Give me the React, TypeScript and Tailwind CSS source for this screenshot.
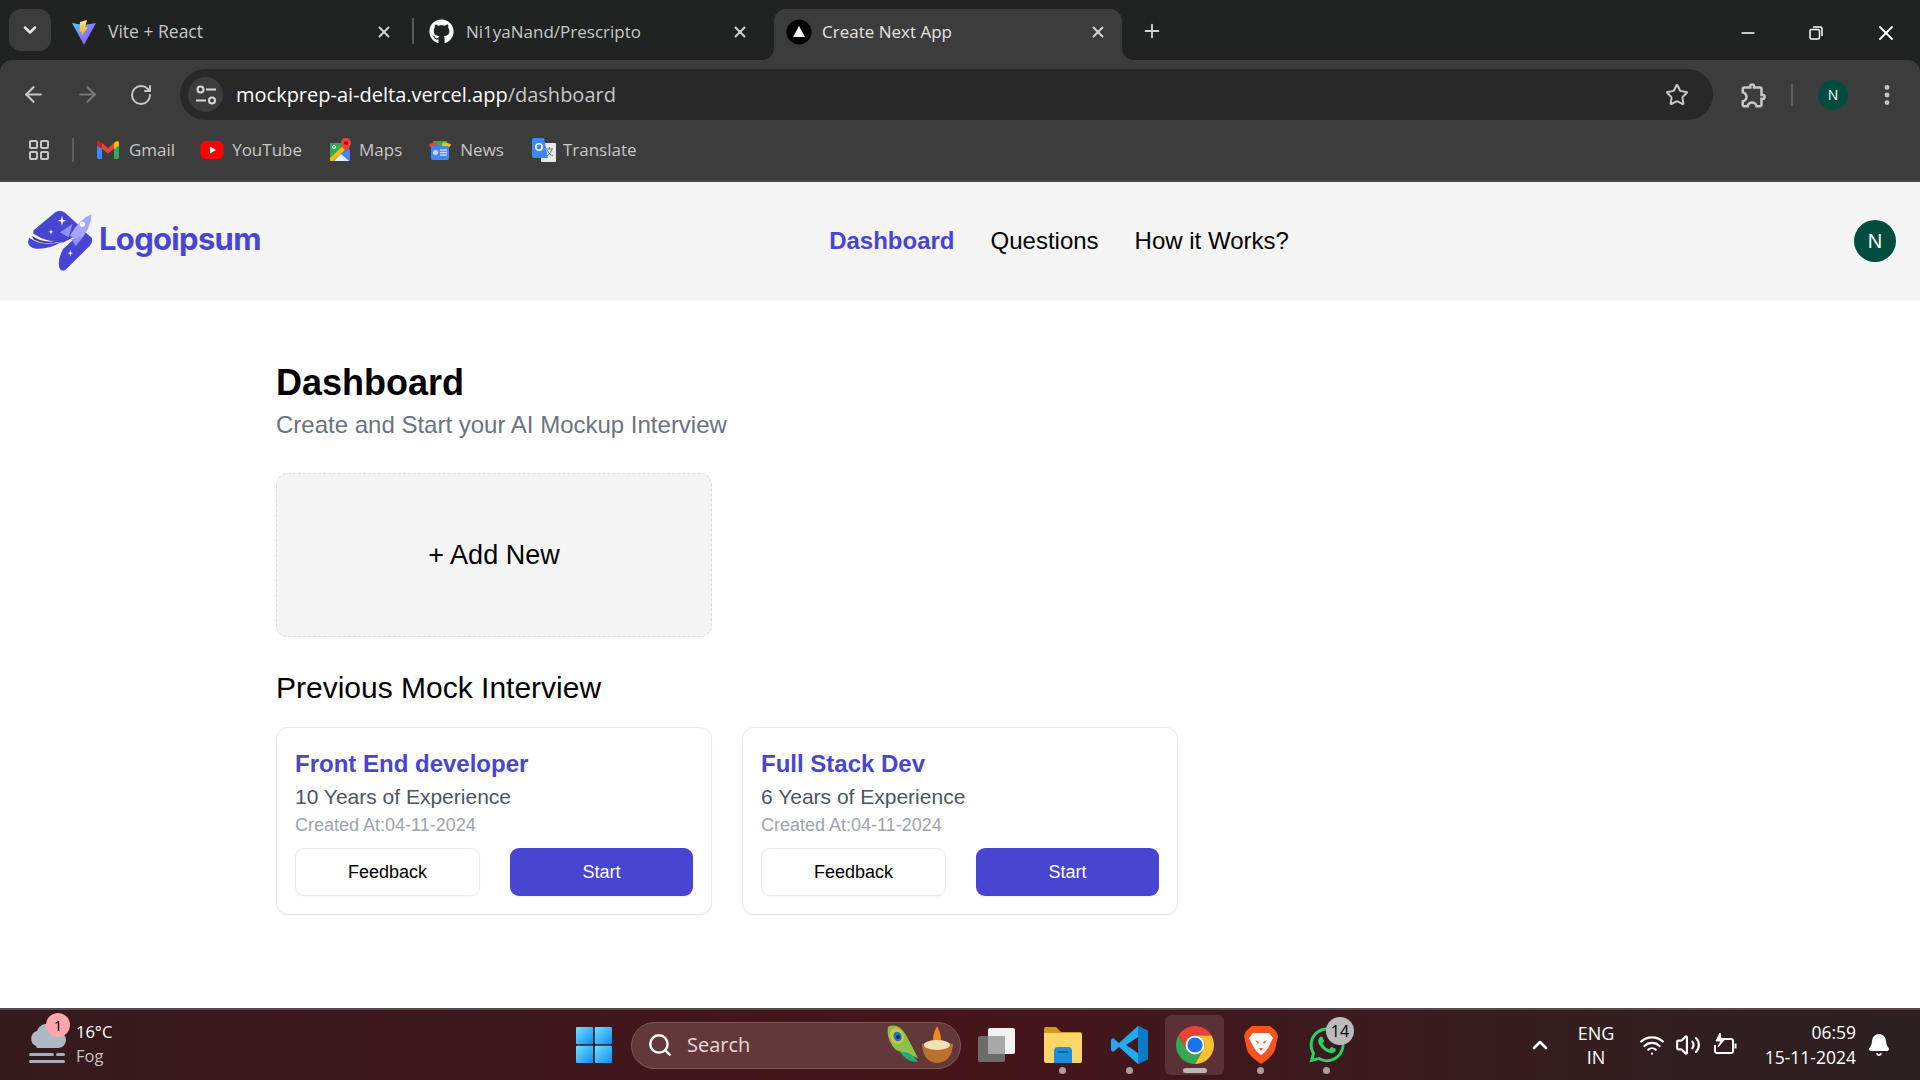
import { ArrowLeft, ArrowRight, RotateCw, Star, EllipsisVertical, X, Plus, Minus, ChevronDown, ChevronUp, Wifi, Volume2, Bell, Search, LayoutGrid } from "lucide-react";
import { FaGithub, FaWhatsapp } from "react-icons/fa";
import { MdOutlineExtension } from "react-icons/md";
import type { ReactNode } from "react";

function ViteIcon() {
  return (
    <svg width="26" height="26" viewBox="0 0 26 26">
      <defs>
        <linearGradient id="viteA" x1="0" y1="0" x2="1" y2="1">
          <stop offset="0" stopColor="#41d1ff" />
          <stop offset="1" stopColor="#bd34fe" />
        </linearGradient>
        <linearGradient id="viteB" x1="0" y1="0" x2="0" y2="1">
          <stop offset="0" stopColor="#ffea83" />
          <stop offset="1" stopColor="#ffa800" />
        </linearGradient>
      </defs>
      <path d="M1 4 L13 6 L25 4 L13.5 25 Q13 25.500 12.500 25 Z" fill="url(#viteA)" />
      <path d="M16 1 L9 3 L8.500 13 L11 12.500 L10.500 17 L17 8 L14 8.500 Z" fill="url(#viteB)" />
    </svg>
  );
}

function NextIcon() {
  return (
    <svg width="26" height="26" viewBox="0 0 26 26">
      <circle cx="13" cy="13" r="12.500" fill="#000" />
      <path d="M13 7 L19 18 H7 Z" fill="#fff" />
    </svg>
  );
}

function TuneIcon() {
  return (
    <svg width="26" height="26" viewBox="0 0 26 26" fill="none" stroke="#d8d8d8" strokeWidth="2">
      <circle cx="7.500" cy="7.500" r="3" />
      <path d="M13 7.500 H23" />
      <path d="M3 18.500 H13" />
      <circle cx="19" cy="18.500" r="3" />
    </svg>
  );
}

function RestoreIcon() {
  return (
    <svg width="16" height="16" viewBox="0 0 16 16" fill="none" stroke="#fff" strokeWidth="1.500">
      <rect x="2" y="4.500" width="9.500" height="9.500" rx="1.500" />
      <path d="M5 2 H12 Q14 2 14 4 V11" />
    </svg>
  );
}

function GmailIcon() {
  return (
    <svg width="24" height="20" viewBox="0 0 24 20">
      <path d="M1 3 L6 6 V19 H2.500 Q1 19 1 17.500 Z" fill="#4285f4" />
      <path d="M23 3 L18 6 V19 H21.500 Q23 19 23 17.500 Z" fill="#34a853" />
      <path d="M6 3 L12 8 L18 3 V9 L12 13.500 L6 9 Z" fill="#ea4335" />
      <path d="M1 3 Q1 0 4 1.500 L6 3 V9 L1 5.500 Z" fill="#c5221f" />
      <path d="M23 3 Q23 0 20 1.500 L18 3 V9 L23 5.500 Z" fill="#fbbc04" />
    </svg>
  );
}

function YoutubeIcon() {
  return (
    <svg width="24" height="20" viewBox="0 0 24 20">
      <rect x="0.500" y="1" width="23" height="18" rx="5" fill="#ff0000" />
      <path d="M10 6.500 L16 10 L10 13.500 Z" fill="#fff" />
    </svg>
  );
}

function MapsIcon() {
  return (
    <svg width="24" height="26" viewBox="0 0 24 26">
      <path d="M1 6 H15 V24 H1 Z" fill="#34a853" />
      <path d="M1 24 L16 8 L21 13 V24 Z" fill="#4285f4" />
      <path d="M1 21 L15 8 L18 11 L4 24 H1 Z" fill="#fbbc04" />
      <path d="M5 24 L12 17 L20 24 Z" fill="#e8f0fe" />
      <path d="M17 1 Q22 1 22 6 Q22 9 17 15 Q12 9 12 6 Q12 1 17 1 Z" fill="#ea4335" />
      <circle cx="17" cy="6" r="2" fill="#a50e0e" />
      <circle cx="5" cy="10" r="1.500" fill="none" stroke="#fff" />
    </svg>
  );
}

function NewsIcon() {
  return (
    <svg width="22" height="22" viewBox="0 0 22 22">
      <path d="M4 2 H18 L19 8 H3 Z" fill="#34a853" />
      <path d="M0 5 L8 3 L10 8 H1 Z" fill="#ea4335" />
      <path d="M14 3 L22 5 L21 8 H12 Z" fill="#fbbc04" />
      <rect x="2" y="7" width="18" height="14" rx="1.500" fill="#4285f4" />
      <rect x="4" y="11" width="5" height="5" rx="2.500" fill="#c6dafc" />
      <path d="M11 11 H18 M11 13.500 H18 M11 16 H18" stroke="#c6dafc" strokeWidth="1.500" />
    </svg>
  );
}

function TranslateIcon() {
  return (
    <svg width="24" height="26" viewBox="0 0 24 26">
      <rect x="9" y="6" width="15" height="19" rx="1" fill="#e8e8e8" />
      <path d="M14 12 H21 M17.500 10 V12 M15 19 Q19 17 20 12 M15 13 Q17 18 21 19" stroke="#777" strokeWidth="1" fill="none" />
      <path d="M2 1 H12 L16 21 H2 Q0 21 0 19 V3 Q0 1 2 1 Z" fill="#4285f4" />
      <circle cx="7" cy="10" r="3.200" fill="none" stroke="#fff" strokeWidth="1.500" />
    </svg>
  );
}

function LogoMark() {
  return (
    <svg width="70" height="67" viewBox="72 83 210 200">
      <path d="M100 150 L165 96 Q182 84 197 98 L256 152 L190 186 Q140 186 100 160 Z" fill="#4845d2" />
      <path d="M275 172 Q280 185 270 195 L200 265 Q185 278 178 262 Q172 235 190 205 L250 150 Z" fill="#4845d2" />
      <path d="M96 166 Q130 192 186 180 Q140 198 100 176 Z" fill="#3e3d7a" />
      <path d="M88 172 Q125 200 186 184 Q145 208 104 204 Q76 196 88 172 Z" fill="#4845d2" />
      <path d="M275 101 Q273 145 235 186 L210 165 Q238 114 275 101 Z" fill="#a5a5fb" />
      <path d="M218 130 L180 155 L206 170 Z" fill="#9090f6" />
      <path d="M246 168 L228 197 L214 176 Z" fill="#9090f6" />
      <circle cx="247" cy="131" r="8" fill="#fff" />
      <path d="M186 106 L189 118 L199 121 L189 124 L186 136 L183 124 L173 121 L183 118 Z" fill="#fff" />
      <path d="M153 146 L155 152 L160 154 L155 156 L153 162 L151 156 L146 154 L151 152 Z" fill="#fff" />
      <path d="M211 208 L213 216 L219 218 L213 220 L211 228 L209 220 L203 218 L209 216 Z" fill="#fff" />
    </svg>
  );
}

function WeatherIcon() {
  return (
    <svg width="38" height="42" viewBox="0 0 38 42">
      <path d="M8 22 A8 8 0 0 1 9 7 A11 11 0 0 1 30 8 A8 8 0 0 1 30 24 H9 Z" fill="#aeb9c6" />
      <rect x="1" y="29" width="25" height="3" rx="1.500" fill="#a3aec0" />
      <rect x="28" y="29" width="9" height="3" rx="1.500" fill="#a3aec0" />
      <rect x="1" y="36" width="36" height="3" rx="1.500" fill="#a3aec0" />
    </svg>
  );
}

function WindowsIcon() {
  return (
    <svg width="36" height="36" viewBox="0 0 36 36">
      <defs>
        <linearGradient id="winA" x1="0" y1="0" x2="1" y2="1">
          <stop offset="0" stopColor="#6fe0ff" />
          <stop offset="1" stopColor="#0f8cf5" />
        </linearGradient>
      </defs>
      <rect x="0" y="0" width="17.200" height="17.200" rx="1" fill="url(#winA)" />
      <rect x="18.800" y="0" width="17.200" height="17.200" rx="1" fill="url(#winA)" />
      <rect x="0" y="18.800" width="17.200" height="17.200" rx="1" fill="url(#winA)" />
      <rect x="18.800" y="18.800" width="17.200" height="17.200" rx="1" fill="url(#winA)" />
    </svg>
  );
}

function FeatherDiya() {
  return (
    <svg width="72" height="42" viewBox="0 0 72 42">
      <path d="M4 3 Q14 -2 22 11 Q28 22 34 34 Q22 30 12 26 Q2 16 4 3 Z" fill="#8bc34a" />
      <path d="M16 28 Q26 26 34 38 Q22 38 16 28 Z" fill="#1fae7a" />
      <ellipse cx="13" cy="12" rx="6.500" ry="8" fill="#e0c23a" transform="rotate(-25 13 12)" />
      <ellipse cx="13.500" cy="12.500" rx="4" ry="5" fill="#0b7dc9" transform="rotate(-25 13.500 12.500)" />
      <circle cx="14" cy="13" r="2" fill="#13206b" />
      <path d="M53 2 Q59 13 56 20 H50 Q47 13 53 2 Z" fill="#f08a1d" />
      <path d="M38 20 Q53 15 69 20 Q68 38 53 39 Q39 38 38 20 Z" fill="#b9722e" />
      <ellipse cx="53" cy="21" rx="13" ry="5" fill="#f3dfb5" />
    </svg>
  );
}

function TaskViewIcon() {
  return (
    <svg width="38" height="34" viewBox="0 0 38 34">
      <rect x="0" y="8" width="27" height="26" rx="2" fill="#6c6c6c" />
      <rect x="10" y="0" width="27" height="26" rx="2" fill="#f2f2f2" />
      <rect x="10" y="8" width="17" height="18" fill="#a8a8a8" />
    </svg>
  );
}

function FolderIcon() {
  return (
    <svg width="38" height="36" viewBox="0 0 38 36">
      <path d="M0 2 Q0 0 2 0 H12 L17 5 H36 Q38 5 38 7 V10 H0 Z" fill="#d69a16" />
      <path d="M0 6 H36 Q38 6 38 8 V34 Q38 36 36 36 H2 Q0 36 0 34 Z" fill="#fcd669" />
      <path d="M10 24 Q10 20 14 20 H24 Q28 20 28 24 V36 H10 Z" fill="#1b8fdc" />
      <rect x="14" y="24" width="10" height="2" fill="#0d5ea6" />
    </svg>
  );
}

function VsCodeIcon() {
  return (
    <svg width="38" height="38" viewBox="0 0 38 38">
      <path d="M27 0 L37 5 V33 L27 38 L8 21 L2 26 L0 24 V14 L2 12 L8 17 Z M27 11 L15 19 L27 27 Z" fill="#23a9f2" />
      <path d="M27 0 L37 5 V33 L27 38 Z" fill="#0a7cc7" />
    </svg>
  );
}

function ChromeIcon() {
  return (
    <svg width="38" height="38" viewBox="4 4 40 40">
      <path d="M41.320 14 A20 20 0 0 0 6.680 14 L15.340 29 A10 10 0 0 1 24 14 Z" fill="#ea4335" />
      <path d="M6.680 14 A20 20 0 0 0 24 44 L32.660 29 A10 10 0 0 1 15.340 29 Z" fill="#34a853" />
      <path d="M24 44 A20 20 0 0 0 41.320 14 L24 14 A10 10 0 0 1 32.660 29 Z" fill="#fbc02d" />
      <circle cx="24" cy="24" r="10" fill="#fff" />
      <circle cx="24" cy="24" r="8" fill="#1a73e8" />
    </svg>
  );
}

function BraveIcon() {
  return (
    <svg width="34" height="38" viewBox="0 0 34 38">
      <path d="M8 0 H26 L32 5 L34 10 L31 24 Q29 30 17 38 Q5 30 3 24 L0 10 L2 5 Z" fill="#f8531f" />
      <path d="M9 7 H25 L29 12 L24 22 L21 26 L17 29 L13 26 L10 22 L5 12 Z" fill="#fff" />
      <path d="M11 14 L15 16 L14 18 Z M23 14 L19 16 L20 18 Z M15 22 H19 L17 25 Z" fill="#f8531f" />
    </svg>
  );
}

function BatteryIcon({ className = "" }: { className?: string }) {
  return (
    <svg width="26" height="26" viewBox="0 0 26 26" fill="none" stroke="#fff" strokeWidth="2" className={className}>
      <path d="M9 7 H19 Q21 7 21 9 V19 Q21 21 19 21 H5 Q3 21 3 19 V13" />
      <path d="M23.500 11.500 V16.500" />
      <path d="M8 1 L4 9 H9 L6 15 L13 7 H9 Z" fill="#fff" strokeWidth="1" />
    </svg>
  );
}

function TaskIcon({ children, dot, className = "" }: { children: ReactNode; dot?: boolean; className?: string }) {
  return (
    <div className={`relative flex h-[60px] w-[38px] items-center justify-center ${className}`}>
      {children}
      {dot && <span className="absolute bottom-[1px] left-[15px] size-[7px] rounded-full bg-[#a99d9e]" />}
    </div>
  );
}

function Bookmark({ icon, label, gap, className = "" }: { icon: ReactNode; label: string; gap: string; className?: string }) {
  return (
    <div className={`flex items-center ${gap} ${className}`}>
      {icon}
      <span className="text-[17px] text-[#c7c7c7]">{label}</span>
    </div>
  );
}

function InterviewCard({ title, years }: { title: string; years: string }) {
  return (
    <div className="rounded-xl border border-[#e8e8ea] bg-white p-[18px] shadow-[0_1px_2px_rgba(0,0,0,0.04)]">
      <h3 className="text-[24px] leading-[36px] font-bold text-[#4845d2]">{title}</h3>
      <p className="text-[21px] leading-[30px] text-[#4b5563]">{years}</p>
      <p className="text-[18px] leading-[26px] text-[#9ca3af]">Created At:04-11-2024</p>
      <div className="mt-[10px] flex gap-[30px]">
        <button className="h-[48px] flex-1 rounded-[9px] border border-[#e8e8ea] bg-white text-[18px] text-black shadow-[0_1px_2px_rgba(0,0,0,0.04)]">Feedback</button>
        <button className="h-[48px] flex-1 rounded-[9px] bg-[#4845d2] text-[18px] text-white shadow-[0_1px_2px_rgba(0,0,0,0.06)]">Start</button>
      </div>
    </div>
  );
}

export default function App() {
  return (
    <div className="flex h-[1080px] w-full flex-col overflow-hidden bg-white font-['Liberation_Sans',sans-serif]">
      {/* browser chrome */}
      <div className="bg-[#202322] font-['Open_Sans',sans-serif]">
        <div className="flex h-[60px] items-end">
          <div className="mb-[9px] ml-[9px] flex size-[42px] items-center justify-center rounded-xl bg-[#3c3c3c]">
            <ChevronDown size={20} strokeWidth={3} className="text-[#e3e3e3]" />
          </div>
          <div className="ml-[9px] flex h-[51px] w-[352px] items-center pr-[19px] pb-[6px] pl-[11px]">
            <ViteIcon />
            <span className="ml-[11px] flex-1 text-[17.500px] text-[#c7c7c7]">Vite + React</span>
            <X size={18} strokeWidth={2.500} className="text-[#d4d4d4]" />
          </div>
          <div className="mb-[16px] h-[26px] w-[2px] bg-[#5a5a5a]" />
          <div className="flex h-[51px] w-[360px] items-center pr-[25px] pb-[6px] pl-[15px]">
            <FaGithub size={25} className="text-white" />
            <span className="ml-[12px] flex-1 text-[17px] text-[#c7c7c7]">Ni1yaNand/Prescripto</span>
            <X size={18} strokeWidth={2.500} className="text-[#d4d4d4]" />
          </div>
          <div className="relative flex h-[51px] w-[348px] items-center rounded-t-xl bg-[#3c3c3c] pr-[15px] pb-[6px] pl-[12px]">
            <div className="absolute bottom-0 left-[-12px] size-[12px] bg-[#3c3c3c]">
              <div className="size-[12px] rounded-br-xl bg-[#202322]" />
            </div>
            <div className="absolute right-[-12px] bottom-0 size-[12px] bg-[#3c3c3c]">
              <div className="size-[12px] rounded-bl-xl bg-[#202322]" />
            </div>
            <NextIcon />
            <span className="ml-[10px] flex-1 text-[17px] text-[#e3e3e3]">Create Next App</span>
            <X size={18} strokeWidth={2.500} className="text-[#d4d4d4]" />
          </div>
          <div className="mb-[18px] ml-[19px] flex-1">
            <Plus size={22} className="text-[#d4d4d4]" />
          </div>
          <div className="mb-[15px] flex items-center gap-[50px] pr-[22px]">
            <Minus size={20} strokeWidth={2} className="text-white" />
            <RestoreIcon />
            <X size={24} strokeWidth={1.800} className="text-white" />
          </div>
        </div>

        <div className="rounded-t-xl bg-[#3c3c3c]">
          <div className="flex h-[60px] items-start pt-[9px]">
            <div className="flex h-[51px] w-[180px] items-center gap-[29px] pl-[21px]">
              <ArrowLeft size={25} className="text-[#c7c7c7]" />
              <ArrowRight size={25} className="text-[#777]" />
              <RotateCw size={24} className="text-[#c7c7c7]" />
            </div>
            <div className="flex h-[51px] w-[1533px] items-center rounded-full bg-[#282828] pr-[24px] pl-[8px]">
              <div className="flex size-[35px] items-center justify-center rounded-full bg-[#3c3c3c]">
                <TuneIcon />
              </div>
              <span className="ml-[13px] flex-1 text-[20px] text-white">
                mockprep-ai-delta.vercel.app<span className="text-[#c7c7c7]">/dashboard</span>
              </span>
              <Star size={24} strokeWidth={2} className="text-[#c7c7c7]" />
            </div>
            <div className="flex h-[51px] flex-1 items-center">
              <MdOutlineExtension size={30} className="ml-[26px] text-[#c7c7c7]" />
              <div className="ml-[22px] h-[22px] w-[2px] bg-[#5f5f5f]" />
              <div className="ml-[25px] flex size-[30px] items-center justify-center rounded-full bg-[#004d40] text-[14px] text-white">N</div>
              <EllipsisVertical size={26} strokeWidth={2.500} className="ml-[26px] text-[#c7c7c7]" />
            </div>
          </div>

          <div className="flex h-[62px] items-center border-b-2 border-[#474747] pl-[27px]">
            <LayoutGrid size={24} className="text-[#c7c7c7]" />
            <div className="ml-[21px] h-[24px] w-[2px] bg-[#5f5f5f]" />
            <Bookmark className="ml-[22px]" gap="gap-[9px]" icon={<GmailIcon />} label="Gmail" />
            <Bookmark className="ml-[25px]" gap="gap-[8px]" icon={<YoutubeIcon />} label="YouTube" />
            <Bookmark className="ml-[27px]" gap="gap-[6px]" icon={<MapsIcon />} label="Maps" />
            <Bookmark className="ml-[27px]" gap="gap-[9px]" icon={<NewsIcon />} label="News" />
            <Bookmark className="ml-[28px]" gap="gap-[7px]" icon={<TranslateIcon />} label="Translate" />
          </div>
        </div>
      </div>

      {/* site header */}
      <header className="z-10 flex h-[118px] items-center justify-between bg-[#f4f4f4] px-6 shadow-[0_1px_2px_rgba(0,0,0,0.04)]">
        <div className="flex w-[240px] items-center">
          <LogoMark />
          <span className="mb-[4px] ml-[5px] font-['Inter',sans-serif] text-[31px] font-bold tracking-[-0.700px] text-[#4845d2]">Logoipsum</span>
        </div>
        <nav className="flex gap-[36px] text-[24px]">
          <span className="font-bold text-[#4845d2]">Dashboard</span>
          <span className="text-black">Questions</span>
          <span className="text-black">How it Works?</span>
        </nav>
        <div className="flex size-[42px] items-center justify-center rounded-full bg-[#004d40] text-[20px] text-white">N</div>
      </header>

      {/* dashboard */}
      <main className="flex-1 px-[276px] pt-[63px]">
        <h1 className="text-[36px] leading-[40px] font-bold text-black">Dashboard</h1>
        <p className="mt-[4px] text-[24px] leading-[36px] text-[#6b7280]">Create and Start your AI Mockup Interview</p>
        <div className="mt-[30px] grid grid-cols-3 gap-[30px]">
          <div className="flex h-[164px] items-center justify-center rounded-xl border border-dashed border-[#dcdcdc] bg-[#f4f4f4]">
            <span className="text-[27px] text-black">+ Add New</span>
          </div>
        </div>
        <h2 className="mt-[31px] text-[30px] leading-[40px] text-black">Previous Mock Interview</h2>
        <div className="mt-[19px] grid grid-cols-3 gap-[30px]">
          <InterviewCard title="Front End developer" years="10 Years of Experience" />
          <InterviewCard title="Full Stack Dev" years="6 Years of Experience" />
        </div>
      </main>

      {/* taskbar */}
      <footer className="flex h-[72px] items-center border-t-2 border-[#5a4a4b] bg-gradient-to-r from-[#351a1c] via-[#46141a] to-[#2b2022] font-['Open_Sans',sans-serif] text-white">
        <div className="relative ml-[28px] flex w-[548px] items-center">
          <WeatherIcon />
          <span className="absolute top-[-7px] left-[18px] flex size-[24px] items-center justify-center rounded-full bg-[#ffa6ad] text-[15px] text-black">1</span>
          <div className="mb-[2px] ml-[10px] flex flex-col text-[16.500px] leading-[24px]">
            <span>16°C</span>
            <span className="text-[#c9c1c1]">Fog</span>
          </div>
        </div>
        <WindowsIcon />
        <div className="ml-[19px] flex h-[47px] w-[330px] items-center rounded-full border border-[#7b5c5e] bg-[#63383b] pr-[4px] pl-[15px]">
          <Search size={26} strokeWidth={2.200} className="text-white" />
          <span className="ml-[14px] flex-1 text-[20px] text-[#e3dada]">Search</span>
          <FeatherDiya />
        </div>
        <TaskIcon className="ml-[17px]"><TaskViewIcon /></TaskIcon>
        <TaskIcon className="ml-[28px]" dot><FolderIcon /></TaskIcon>
        <TaskIcon className="ml-[29px]" dot><VsCodeIcon /></TaskIcon>
        <div className="relative ml-[16px] flex h-[60px] w-[59px] items-center justify-center rounded-md bg-[#5a3236]">
          <ChromeIcon />
          <span className="absolute bottom-[2px] left-[18px] h-[5px] w-[24px] rounded-full bg-[#bdb6b6]" />
        </div>
        <TaskIcon className="ml-[18px]" dot><BraveIcon /></TaskIcon>
        <TaskIcon className="ml-[28px]" dot>
          <FaWhatsapp size={40} className="text-[#25d366]" />
          <span className="absolute top-[2px] left-[18px] flex size-[28px] items-center justify-center rounded-full bg-[#bbbbbb] text-[16px] text-black">14</span>
        </TaskIcon>
        <ChevronUp size={24} strokeWidth={2.500} className="ml-[182px] text-white" />
        <div className="ml-[22px] flex w-[44px] flex-col items-center text-[18px] leading-[24px]">
          <span>ENG</span>
          <span>IN</span>
        </div>
        <Wifi size={26} className="ml-[21px]" />
        <Volume2 size={26} className="ml-[10px]" />
        <BatteryIcon className="ml-[11px]" />
        <div className="ml-[18px] flex w-[100px] flex-col items-end text-[17.500px] leading-[25px]">
          <span>06:59</span>
          <span>15-11-2024</span>
        </div>
        <Bell size={24} fill="#fff" className="ml-[11px]" />
      </footer>
    </div>
  );
}
